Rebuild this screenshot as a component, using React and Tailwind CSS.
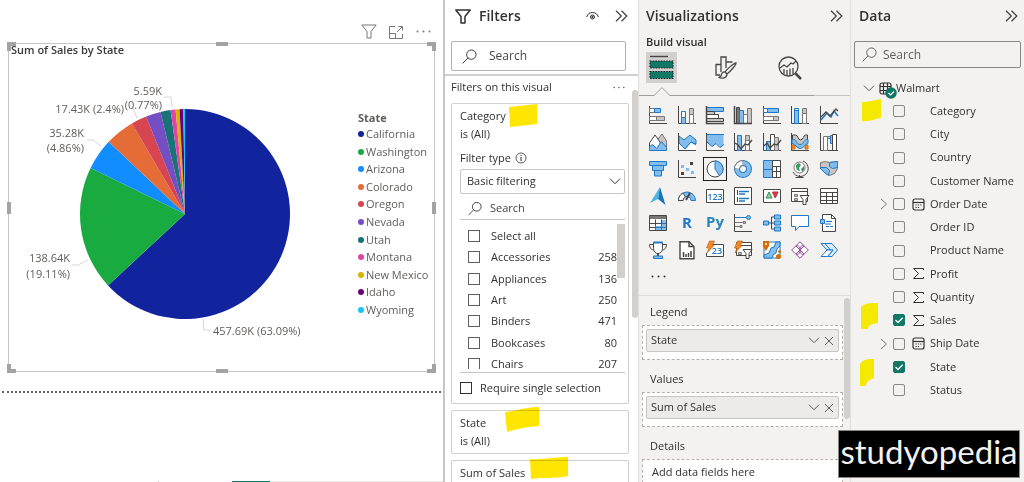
import React, { useState } from 'react';

const slices = [
  { name: 'California', share: 63.09, color: '#12239e' },
  { name: 'Washington', share: 19.11, color: '#1aab40' },
  { name: 'Arizona', share: 4.86, color: '#118dff' },
  { name: 'Colorado', share: 4.5, color: '#e66c37' },
  { name: 'Oregon', share: 2.4, color: '#d64550' },
  { name: 'Nevada', share: 2.29, color: '#744ec2' },
  { name: 'Utah', share: 1.55, color: '#197278' },
  { name: 'Montana', share: 0.77, color: '#e044a7' },
  { name: 'New Mexico', share: 0.6, color: '#d9b300' },
  { name: 'Idaho', share: 0.57, color: '#6b007b' },
  { name: 'Wyoming', share: 0.26, color: '#15c6f4' },
];

const categories = [
  { name: 'Select all', count: '' },
  { name: 'Accessories', count: 258 },
  { name: 'Appliances', count: 136 },
  { name: 'Art', count: 250 },
  { name: 'Binders', count: 471 },
  { name: 'Bookcases', count: 80 },
  { name: 'Chairs', count: 207 },
];

const fields = [
  { name: 'Category' },
  { name: 'City' },
  { name: 'Country' },
  { name: 'Customer Name' },
  { name: 'Order Date', icon: 'date' },
  { name: 'Order ID' },
  { name: 'Product Name' },
  { name: 'Profit', icon: 'sum' },
  { name: 'Quantity', icon: 'sum' },
  { name: 'Sales', icon: 'sum' },
  { name: 'Ship Date', icon: 'date' },
  { name: 'State' },
  { name: 'Status' },
];

// Palette of the visual icons
const K = '#484644';
const B = '#1f78c8';
const L = '#83bdeb';
const G = '#c8c6c4';
const M = '#797775';
const axis = <path d="M.5 0v17.5H18" stroke={K} />;

const visuals = [
  { name: 'Stacked bar chart', art: <>{axis}<path d="M.5 2.5h5v4h-5z" fill="#fff" stroke={M} /><path d="M5.5 2.5h6v4h-6z" fill={L} stroke={B} /><path d="M.5 10.5h7v4h-7z" fill="#fff" stroke={M} /><path d="M7.500 10.500h8v4h-8z" fill={G} stroke={M} /></> },
  { name: 'Stacked column chart', art: <>{axis}<path d="M3.500 5.500h4v6h-4z" fill="#fff" stroke={B} /><path d="M3.500 11.500h4v6h-4z" fill={L} stroke={B} /><path d="M11.500 8.500h4v9h-4z" fill="#fff" stroke={M} /><path d="M11.500 2.500h4v6h-4z" fill={G} stroke={M} /></> },
  { name: 'Clustered bar chart', art: <><path d="M.5 1.500h17v4H.5z" fill={L} stroke={B} /><path d="M.5 5.500h8v3H.5zM.5 12.500h17v3H.5z" fill={G} stroke={K} /><path d="M.5 8.500h12v4H.5z" fill="#fff" stroke={K} /><path d="M.5 0v17.500H18" stroke={K} strokeWidth="1.500" /></> },
  { name: 'Clustered column chart', art: <><path d="M2.500 1.500h3v16h-3z" fill={M} stroke={K} /><path d="M5.500 4.500h4v13h-4z" fill={L} stroke={B} /><path d="M9.500 8.500h4v9h-4z" fill="#fff" stroke={M} /><path d="M13.500 2.500h4v15h-4z" fill={G} stroke={M} /><path d="M.5 0v17.500H18" stroke={K} strokeWidth="1.500" /></> },
  { name: '100% stacked bar chart', art: <>{axis}<path d="M.5 2.500h4v4h-4z" fill="#fff" stroke={B} /><path d="M4.500 2.500h11v4h-11z" fill={L} stroke={B} /><path d="M.5 10.500h10v4H.5z" fill="#fff" stroke={M} /><path d="M10.500 10.500h5v4h-5z" fill={G} stroke={M} /></> },
  { name: '100% stacked column chart', art: <>{axis}<path d="M3.500 2.500h4v4h-4z" fill="#fff" stroke={B} /><path d="M3.500 4.500h4v13h-4z" fill={L} stroke={B} /><path d="M11.500 7.500h4v10h-4z" fill="#fff" stroke={M} /><path d="M11.500 2.500h4v5h-4z" fill={G} stroke={M} /></> },
  { name: 'Line chart', art: <>{axis}<path d="M1 14l6-7 4 4 3-6 4 5" stroke={B} strokeWidth="1.500" /><path d="M1 11l5-5 4 4 6-7 2 2" stroke={K} strokeWidth="1.300" /></> },
  { name: 'Area chart', art: <><path d="M9 6l4-5 4.500 7v9H9z" fill={G} stroke={M} /><path d="M.5 17V10l5.500-8 5 7 1 8z" fill="#fff" stroke={K} /><path d="M.5 17.500v-4l3-2 4 4 5-7 5 6v3z" fill={L} stroke={B} /></> },
  { name: 'Stacked area chart', art: <><path d="M1 3l5 4 6-5 6 5v4l-5-2-6 7-6-6z" fill={L} stroke={B} /><path d="M1 11l6 6 6-8 5 3v5H1z" fill="#fff" /><path d="M1 10l6 6 6-7 5 3" stroke={B} />{axis}</> },
  { name: '100% stacked area chart', art: <><path d="M1 1.500h16.500v10l-3 3-4-4-4 3L1 9z" fill={L} /><path d="M1 9l5 4.500 4-3 4 4 4-3" stroke={B} /><path d="M1 1.500h17" stroke={B} />{axis}</> },
  { name: 'Line and stacked column chart', art: <>{axis}<path d="M3.500 2.500h4v15h-4z" fill={L} stroke={B} /><path d="M11.500 2.500h4v5h-4z" fill={G} stroke={M} /><path d="M11.500 7.500h4v10h-4z" fill="#fff" stroke={M} /><path d="M1 10l3 2 3 4 4-5 3 1 4-5" stroke={K} strokeWidth="1.300" /></> },
  { name: 'Line and clustered column chart', art: <>{axis}<path d="M3.500 8.500h4v9h-4z" fill={L} stroke={B} /><path d="M7.500 1.500h4v16h-4z" fill="#fff" stroke={K} /><path d="M11.500 4.500h4v13h-4z" fill={G} stroke={M} /><path d="M1 13l3-3 3 5 4-4 3 1 4-5" stroke={K} strokeWidth="1.300" /></> },
  { name: 'Ribbon chart', art: <>{axis}<path d="M1 12h3v4H1zM14 12h3v4h-3z" fill="#f2882f" stroke="#d86c00" /><path d="M1.500 2h3c3 0 2 5 5 5s3-5 5-5h2v5c-3 0-4 7-7 7s-4-7-8-7z" fill={G} stroke={K} /><path d="M1 6.500c5-1 4 5 8 5s4-6 8-5v4c-3 0-4 5-8 5s-4-5-8-5z" fill={L} stroke={B} /></> },
  { name: 'Waterfall chart', art: <>{axis}<path d="M3.500 3.500h4v14h-4z" fill="#fff" stroke={M} /><path d="M7.500 3.500h3v2h-3z" fill={G} stroke={M} /><path d="M10.500 2.500h2v8h-2z" fill={L} stroke={B} /><path d="M12.500 1.500h4v16h-4z" fill="#fff" stroke={K} /></> },
  { name: 'Funnel chart', art: <path d="M.5 1.500h17v4H.5zM3.500 5.500h11v5h-11zM5.500 10.500h7v5.500h-7z" fill={L} stroke={B} /> },
  { name: 'Scatter chart', art: <>{axis}<path d="M12 2h3v3h-3zM3 12h3v3H3z" fill={K} /><path d="M3 5h3v3H3zM8 8h3v3H8zM13 11h3v3h-3z" fill={L} /></> },
  { name: 'Pie chart', art: <><circle cx="9" cy="9" r="8" fill="#fff" stroke={K} /><path d="M9 1a8 8 0 0 1 4.500 14.600L9 9z" fill={L} stroke={B} /></> },
  { name: 'Donut chart', art: <><circle cx="9" cy="9" r="6" stroke={B} strokeWidth="6" /><circle cx="9" cy="9" r="6" stroke={L} strokeWidth="4" /><path d="M3 9a6 6 0 0 1 6-6" stroke={M} strokeWidth="6" /><path d="M3 8.500A6 6 0 0 1 8.500 3" stroke="#fff" strokeWidth="4" /></> },
  { name: 'Treemap', art: <><path d="M.5 .5h9v17h-9z" fill={L} stroke={B} /><path d="M.5 9.500h9" stroke={B} /><path d="M9.500 .5h8v17h-8zM9.500 6.500h8M9.500 11.500h8M13.500 6.500v11" fill="#fff" stroke={K} /></> },
  { name: 'Map', art: <><circle cx="8.500" cy="7.500" r="5.500" fill="#fff" stroke={M} /><path d="M5 5l3-2 2 2-2 3 1 3-3-1-1-3zM10 9l3-3v4l-2 2z" fill="#3a9a5b" /><path d="M12 1a8 8 0 1 1-10 11M8.500 15v2.500M4.500 17.500h8" stroke={K} /></> },
  { name: 'Filled map', art: <><path d="M.5 2.500l5-1 4 1 8-1v7l-3 5-5 2-5-3-4-4z" fill={G} stroke={M} /><path d="M9.500 2.500l8-1v6l-5 1-3-2zM.5 7.500h6l3 3-1 5-4-3-4-4z" fill={L} stroke={B} /></> },
  { name: 'Azure map', art: <><path d="M11 0L1 16l8-4z" fill="#4cb4e7" /><path d="M11 0l5.500 18L9 12z" fill="#1976b8" /></> },
  { name: 'Gauge', art: <><path d="M.5 13.500a8.500 8.500 0 0 1 17 0h-4.500a4 4 0 0 0-8 0z" fill={L} stroke={B} /><path d="M.5 13.500A8.500 8.500 0 0 1 5 6l2.500 4A4 4 0 0 0 5 13.500z" fill="#fff" stroke={K} /><path d="M8 13l4-7" stroke={K} strokeWidth="2" /></> },
  { name: 'Card', art: <><path d="M.5 2.500h17v13H.5z" fill="#fff" stroke={K} /><text x="9" y="12.500" textAnchor="middle" fontSize="9" fill={B} fontWeight="600">123</text></> },
  { name: 'Multi-row card', art: <><path d="M.5 .5h17v17H.5z" fill="#fff" stroke={K} /><path d="M3.500 3v5M3.500 10v5" stroke={K} /><path d="M5 4.500h10M5 7h6M5 11.500h10M5 14h6" stroke={B} strokeWidth="1.400" /></> },
  { name: 'KPI', art: <><path d="M.5 2.500h17v13H.5z" fill="#fff" stroke={K} /><path d="M3 11l3-6 3 6z" fill="#8fd0a5" stroke="#2e8b50" /><path d="M9.500 5h5.500l-2.700 6z" fill="#e23b45" stroke="#c4262e" /></> },
  { name: 'Slicer', art: <><path d="M.5 1.500h16v13H.5zM.5 4.500h16" fill="#fff" stroke={K} /><path d="M3.500 7.500h3v2h-3zM3.500 11.500h3v2h-3z" fill={G} stroke={M} /><path d="M9 8.500h9l-3 4v5h-3v-5z" fill="#fff" stroke={K} /></> },
  { name: 'Table', art: <path d="M.5 1.500h17v15H.5zM.5 5.500h17M.5 9.500h17M.5 13.500h17M6.500 5.500v11M12.500 5.500v11" fill="#fff" stroke={K} /> },
  { name: 'Matrix', art: <><path d="M.5 1.500h17v15H.5z" fill="#fff" /><path d="M12 6h5v11h-5zM6 12h6v5H6z" fill={L} /><path d="M6.500 5.500v6M12.500 5.500v6M1 9.500h11M1 13.500h5" stroke={K} /><path d="M12.500 9.500h5M6.500 13.500h11M12.500 11v6M6.500 11v6" stroke={B} /><path d="M.5 1.500h17v15H.5z" stroke={K} /><path d="M1 3.500h16" stroke={M} strokeWidth="3" /></> },
  { name: 'R script visual', art: <text x="9" y="14" textAnchor="middle" fontSize="15" fontWeight="700" fill={B}>R</text> },
  { name: 'Python visual', art: <text x="9" y="13" textAnchor="middle" fontSize="15" fontWeight="700" fill="#2a86b8">Py</text> },
  { name: 'Key influencers', art: <>{axis}<path d="M1 3.500h12M1 8.500h9M1 12.500h5" stroke={M} /><path d="M1 3.500h12" stroke={B} /><circle cx="14.500" cy="3.500" r="2" fill={L} stroke={B} /><path d="M9.500 7.500h2v2h-2zM6 11.500h2v2H6z" fill={G} stroke={M} /></> },
  { name: 'Decomposition tree', art: <><path d="M6 9h5M8.500 3v12M8.500 3H11M8.500 15H11" stroke={K} /><path d="M.5 7h5v4h-5zM11.500 1h6v4h-6zM11.500 7h6v4h-6zM11.500 13h6v4h-6z" fill={L} stroke={B} /></> },
  { name: 'Q&A', art: <path d="M.5 1.500h17v11H8l-3.500 4v-4h-4z" fill="#fff" stroke={B} /> },
  { name: 'Narrative', art: <><path d="M2.500 .5h9l4 4v13h-13z" fill="#fff" stroke={K} /><path d="M11.500 .5v4h4" stroke={K} /><path d="M.5 5.500h4v4h-4z" fill={L} stroke={B} /><path d="M6 7.500h6M6 12.500h3M10 12.500h3M5 10h6" stroke={B} /></> },
  { name: 'Goals', art: <><path d="M4.500 3.500h-4c0 4 2 5 5 6M13.500 3.500h4c0 4-2 5-5 6" stroke={K} /><path d="M4.500 1.500h9v6c0 3-2 5-4.500 5s-4.500-2-4.500-5z" fill="#fff" stroke={K} /><path d="M4.500 1.500h9" stroke={B} strokeWidth="2" /><path d="M9 12.500v3" stroke={K} strokeWidth="2" /><path d="M4.500 15h9v2.500h-9z" fill={L} stroke={B} /></> },
  { name: 'Paginated report', art: <><path d="M2 .7h9l5 5v12H2z" fill="#fff" stroke={K} strokeWidth="1.400" /><path d="M11 .5v5h5" stroke={K} strokeWidth="1.400" /><path d="M5.500 16v-5M8 16v-3M10.500 16v-4M13 16v-6" stroke={K} strokeWidth="1.500" /></> },
  { name: 'Card (new)', art: <><path d="M2 3.500h15.500v12H.5V12" fill="#fff" stroke={K} /><text x="11" y="13" textAnchor="middle" fontSize="9" fill={B} fontWeight="600">23</text><path d="M3.500 0h5L6.500 4.500H8L1 12l2-5H.5z" fill="#f2882f" stroke="#b85a00" strokeWidth=".6" /></> },
  { name: 'Slicer (new)', art: <><path d="M2.500 1.500h15v13h-15zM6 4.500h11.500" fill="#fff" stroke={K} /><path d="M4.500 11.500h3v2h-3z" fill={G} stroke={M} /><path d="M9 8.500h9l-3 4v5h-3v-5z" fill="#fff" stroke={K} /><path d="M3.500 0h5L6.500 4.500H8L1 12l2-5H.5z" fill="#f2882f" stroke="#b85a00" strokeWidth=".6" /></> },
  { name: 'ArcGIS Maps', art: <><path d="M1 1h16v16H1z" fill="#fff" stroke={B} /><path d="M1 17v-3l5-2 2-5 3-1 2-5h4v4l-3 3-1 4-3 2-1 3z" fill={L} stroke={B} /><path d="M0 0h6v5l-3 5-3-5z" fill="#d86c00" /><circle cx="3" cy="3" r="1" fill="#fff" /><circle cx="15.500" cy="15.500" r="2.500" fill="#d86c00" /><circle cx="16.500" cy="10.500" r="1.500" fill="#d86c00" /></> },
  { name: 'Power Apps', art: <path d="M9 .7L17.300 9 9 17.300.7 9zM5 5l8 8M13 5l-8 8M5 5c3-1 4 1 4 4M13 5c-3-1-4 1-4 4M5 13c3 1 4-1 4-4M13 13c-3 1-4-1-4-4" fill="#fff" stroke="#9b4aa3" strokeLinejoin="round" /> },
  { name: 'Power Automate', art: <><path d="M1 2.500h11l5.500 6.500-5.500 6.500H8L13 9H7z" fill="#dcecf9" stroke={B} /><path d="M7 9h6l-5.500 6.500H1z" fill="#fff" stroke={B} /><path d="M5 2.500l5.500 6.500" stroke={B} /></> },
];

const labelClass = 'fill-[#605e5c] text-[11px]';

const Chart = () => {
  const cx = 176;
  const cy = 158;
  const r = 105;
  let total = 0;
  const point = (share) => {
    const a = (share / 100) * Math.PI * 2;
    return `${cx + r * Math.sin(a)} ${cy - r * Math.cos(a)}`;
  };

  return (
    <svg width="345" height="300" viewBox="0 0 345 300" role="img" aria-label="Sum of Sales by State" className="shrink-0">
      {slices.map(s => {
        const from = total;
        total += s.share;
        return (
          <path
            key={s.name}
            d={`M${cx} ${cy}L${point(from)}A${r} ${r} 0 ${s.share > 50 ? 1 : 0} 1 ${point(total)}Z`}
            fill={s.color}
          />
        );
      })}
      <g fill="none" stroke="#d8d6d4">
        <path d="M155 41h7l1 10M123 50l5 12M78 84h6l8 6M63 209h6l10-5M194 263l1 11h7" />
      </g>
      <g className={labelClass}>
        <text x="153" y="39" textAnchor="end">5.59K</text>
        <text x="153" y="53" textAnchor="end">(0.77%)</text>
        <text x="115" y="57" textAnchor="end">17.43K (2.4%)</text>
        <text x="75" y="81" textAnchor="end">35.28K</text>
        <text x="75" y="96" textAnchor="end">(4.86%)</text>
        <text x="61" y="206" textAnchor="end">138.64K</text>
        <text x="61" y="222" textAnchor="end">(19.11%)</text>
        <text x="204" y="279">457.69K (63.09%)</text>
      </g>
    </svg>
  );
};

const Funnel = ({ className }) => (
  <svg viewBox="0 0 16 15" fill="none" stroke="currentColor" strokeLinejoin="round" className={className}>
    <path d="M.8 1h14.400L10 7.500v6.500H6V7.500z" />
  </svg>
);

const Magnifier = ({ className }) => (
  <svg viewBox="0 0 16 16" width="15" height="15" fill="none" stroke="currentColor" className={className}>
    <circle cx="10" cy="6" r="5" />
    <path d="M6.500 9.500L.7 15.300" />
  </svg>
);

const Chevrons = () => (
  <button type="button" aria-label="Collapse pane" className="text-[#484644]">
    <svg viewBox="0 0 13 12" width="13" height="12" fill="none" stroke="currentColor" strokeWidth="1.300">
      <path d="M1 .7L6.300 6 1 11.300M6.500 .7L11.800 6l-5.300 5.300" />
    </svg>
  </button>
);

const ChevronDown = () => (
  <svg viewBox="0 0 12 7" width="12" height="7" fill="none" stroke="currentColor">
    <path d="M1 .7l5 5 5-5" />
  </svg>
);

const Dots = ({ className }) => (
  <svg viewBox="0 0 15 3" width="15" height="3" fill="currentColor" className={className}>
    <circle cx="1.500" cy="1.500" r="1" />
    <circle cx="7.500" cy="1.500" r="1" />
    <circle cx="13.500" cy="1.500" r="1" />
  </svg>
);

const ReportCanvas = () => (
  <main className="flex min-w-0 flex-1 flex-col bg-white">
    <div className="flex h-[43px] items-end justify-end gap-3 pr-3 pb-1 text-[#797775]">
      <button type="button" aria-label="Filters on visual"><Funnel className="h-[15px] w-4" /></button>
      <button type="button" aria-label="Focus mode">
        <svg viewBox="0 0 15 14" width="15" height="14" fill="none" stroke="currentColor">
          <path d="M6 1.500H.5v12h13V9M.5 8.500h6v5M8 7l5.500-5.500M9.500 1.500h4v4" />
        </svg>
      </button>
      <button type="button" aria-label="More options" className="flex h-[15px] items-center"><Dots /></button>
    </div>

    <section className="relative mx-2 h-[329px] border border-[#c8c6c4]">
      <span className="absolute -top-0.5 -left-0.5 size-[9px] border-t-4 border-l-4 border-[#a3a3a3]" />
      <span className="absolute -top-0.5 -right-0.5 size-[9px] border-t-4 border-r-4 border-[#a3a3a3]" />
      <span className="absolute -bottom-0.5 -left-0.5 size-[9px] border-b-4 border-l-4 border-[#a3a3a3]" />
      <span className="absolute -right-0.5 -bottom-0.5 size-[9px] border-r-4 border-b-4 border-[#a3a3a3]" />
      <span className="absolute -top-0.5 left-1/2 h-1 w-3 -translate-x-1/2 bg-[#a3a3a3]" />
      <span className="absolute -bottom-0.5 left-1/2 h-1 w-3 -translate-x-1/2 bg-[#a3a3a3]" />
      <span className="absolute top-1/2 -left-0.5 h-3 w-1 -translate-y-1/2 bg-[#a3a3a3]" />
      <span className="absolute top-1/2 -right-0.5 h-3 w-1 -translate-y-1/2 bg-[#a3a3a3]" />

      <h2 className="relative pl-0.5 text-[11px] leading-3 font-semibold text-[#3b3a39]">Sum of Sales by State</h2>
      <div className="flex justify-between">
        <Chart />
        <div className="w-[76px] pt-[54px] text-[11px] leading-4 text-[#605e5c]">
          <h3 className="font-bold">State</h3>
          <ul className="flex h-48 flex-col justify-between">
            {slices.map(s => (
              <li key={s.name} className="flex items-center gap-0.5 whitespace-nowrap">
                <span className="size-1.5 shrink-0 rounded-full" style={{ background: s.color }} />
                {s.name}
              </li>
            ))}
          </ul>
        </div>
      </div>
    </section>

    <div className="mx-0.5 mt-[19px] border-t-2 border-dotted border-[#605e5c]" />
    <div className="mt-auto flex h-px">
      <span className="ml-[158px] w-px bg-[#c8c6c4]" />
      <span className="ml-[73px] w-[38px] bg-[#117865]" />
      <span className="flex-1 bg-[#edebe9]" />
    </div>
  </main>
);

const FilterCard = ({ title, mark, children }) => (
  <section className="relative min-h-[43px] rounded-xs border border-[#d2d0ce] px-2 py-[3px]">
    <h4 className="leading-[18px]">{title}</h4>
    {mark}
    {children}
  </section>
);

const Filters = () => {
  const [picked, setPicked] = useState({});

  return (
    <aside className="flex w-[195px] shrink-0 flex-col border-l-2 border-[#c8c6c4] bg-white text-[#323130]">
      <header className="flex h-8 items-center pr-2.5 pl-2.5">
        <Funnel className="h-[15px] w-4 stroke-[1.5]" />
        <h2 className="ml-2 text-sm font-semibold">Filters</h2>
        <button type="button" aria-label="Hide filter pane" className="mr-4 ml-auto">
          <svg viewBox="0 0 13 10" width="13" height="10" fill="none" stroke="currentColor">
            <path d="M.7 6a6 6 0 0 1 11.600 0" />
            <circle cx="6.500" cy="6" r="2" />
            <circle cx="6.500" cy="6" r=".7" fill="currentColor" />
          </svg>
        </button>
        <Chevrons />
      </header>
      <div className="border-b-2 border-[#d2d0ce] pt-[9px] pr-3 pb-[3px] pl-1.5">
        <label className="flex h-[30px] items-center gap-3 rounded-xs border border-[#b3b0ad] pl-2.5">
          <Magnifier className="shrink-0" />
          <input aria-label="Search filters" placeholder="Search" className="w-full min-w-0 text-xs outline-none placeholder:text-[#484644]" />
        </label>
      </div>

      <div className="flex min-h-0 flex-1 overflow-hidden text-[11px]">
        <div className="min-w-0 flex-1 pr-[3px] pl-1.5">
          <div className="flex h-[22px] items-center justify-between pr-1">
            <h3>Filters on this visual</h3>
            <button type="button" aria-label="More options" className="text-[#605e5c]"><Dots className="w-3" /></button>
          </div>
          <div className="mt-[5px] flex flex-col gap-1.5">
            <FilterCard
              title="Category"
              mark={<svg viewBox="0 0 28 23" className="absolute top-0 left-[57px] w-7 fill-[#ffe600] mix-blend-multiply"><path d="M0 3L28 0v20L1 23z" /></svg>}
            >
              <p className="leading-[18px]">is (All)</p>
              <div className="mt-1.5 flex items-center gap-1 leading-[18px]">
                <label htmlFor="filter-type">Filter type</label>
                <svg viewBox="0 0 12 12" width="12" height="12" fill="none" stroke="currentColor" strokeWidth=".8">
                  <circle cx="6" cy="6" r="5" />
                  <path d="M6 5v4M6 3v1" strokeWidth="1" />
                </svg>
              </div>
              <div className="relative mt-0.5 mr-[-5px]">
                <select id="filter-type" className="h-[25px] w-full appearance-none rounded-xs border border-[#c8c6c4] bg-white pl-1.5">
                  <option>Basic filtering</option>
                  <option>Advanced filtering</option>
                  <option>Top N</option>
                </select>
                <span className="pointer-events-none absolute top-[9px] right-1"><ChevronDown /></span>
              </div>
              <label className="mr-[-5px] flex h-[26px] items-center gap-2 border-b border-[#c8c6c4] pt-[3px] pl-2">
                <Magnifier className="w-[14px] shrink-0" />
                <input aria-label="Search categories" placeholder="Search" className="w-full min-w-0 outline-none placeholder:text-[#484644]" />
              </label>
              <div className="mr-[-5px] flex h-[149px] overflow-hidden">
                <ul className="mt-1.5 flex h-[148px] flex-1 flex-col justify-between leading-3">
                  {categories.map(c => (
                    <li key={c.name} className="flex h-5 items-center pl-2">
                      <input
                        type="checkbox"
                        id={`cat-${c.name}`}
                        checked={!!picked[c.name]}
                        onChange={e => setPicked({ ...picked, [c.name]: e.target.checked })}
                        className="size-3 appearance-none border border-[#605e5c] checked:bg-[#117865]"
                      />
                      <label htmlFor={`cat-${c.name}`} className="ml-[11px] flex-1">{c.name}</label>
                      <span>{c.count}</span>
                    </li>
                  ))}
                </ul>
                <span className="mt-1 h-[54px] w-2 bg-[#d2d0ce]" />
              </div>
              <label className="mt-[3px] mr-[-5px] flex h-7 items-center gap-2 border-t border-[#c8c6c4] pt-[3px] whitespace-nowrap">
                <input type="checkbox" className="size-3 shrink-0 appearance-none border border-[#323130] checked:bg-[#117865]" />
                Require single selection
              </label>
            </FilterCard>
            <FilterCard
              title="State"
              mark={<svg viewBox="0 0 34 25" className="absolute -top-1 left-[53px] w-[34px] fill-[#ffe600] mix-blend-multiply"><path d="M0 5C12 4 20 0 34 0v19C20 20 12 22 2 25z" /></svg>}
            >
              <p className="leading-[18px]">is (All)</p>
            </FilterCard>
            <FilterCard
              title="Sum of Sales"
              mark={<svg viewBox="0 0 38 22" className="absolute -top-1 left-[78px] w-[38px] fill-[#ffe600] mix-blend-multiply"><path d="M0 2c14 1 24-2 38-2v19C24 22 14 20 1 22z" /></svg>}
            />
          </div>
        </div>
        <span className="mt-3.5 h-[228px] w-1.5 rounded-full bg-[#d2d0ce]" />
      </div>
    </aside>
  );
};

const Well = ({ title, value }) => (
  <section>
    <h4 className="pl-2 leading-[18px]">{title}</h4>
    <div className="mt-1 h-[35px] border border-dashed border-[#b3b0ad] bg-white p-[3px]">
      {value ? (
        <div className="flex h-[23px] items-center gap-1 rounded-xs border border-[#c8c6c4] bg-[#edebe9] pr-1 pl-1 text-[#323130]">
          <span className="flex-1">{value}</span>
          <button type="button" aria-label={`${value} options`} className="text-[#605e5c]"><ChevronDown /></button>
          <button type="button" aria-label={`Remove ${value}`} className="text-[#605e5c]">
            <svg viewBox="0 0 10 10" width="10" height="10" fill="none" stroke="currentColor"><path d="M1 1l8 8M9 1L1 9" /></svg>
          </button>
        </div>
      ) : (
        <p className="pl-1.5 leading-[18px]">Add data fields here</p>
      )}
    </div>
  </section>
);

const Visualizations = () => (
  <aside className="flex w-[212px] shrink-0 flex-col border-l border-[#e1dfdd] text-[#323130]">
    <header className="flex h-8 items-center justify-between pr-[7px] pl-[7px]">
      <h2 className="text-sm font-semibold">Visualizations</h2>
      <Chevrons />
    </header>
    <h3 className="pl-[7px] text-[11px] leading-5 font-semibold">Build visual</h3>
    <div className="flex gap-[33px] pl-[7px]">
      <button type="button" aria-label="Build visual" className="grid size-[31px] place-items-center bg-[#d2d0ce]">
        <svg viewBox="0 0 25 25" width="25" height="25" fill="none">
          <path d="M1 1.500h18" stroke={K} strokeWidth="1.400" />
          <path d="M1 6h23v7H1zM1 16.500h23v7H1z" fill="#117865" stroke="#201f1e" strokeWidth="1.200" strokeDasharray="1.500 1.200" />
        </svg>
      </button>
      <button type="button" aria-label="Format visual" className="grid size-[31px] place-items-center">
        <svg viewBox="0 0 22 23" width="22" height="23" fill="none" stroke={K} strokeWidth="1.300">
          <path d="M5 19H1V8.500h5V16M6 8.500V1h5v11M11 6h6.500" />
          <path d="M21 7c-2 0-9 6-11 9l2 2c3-2 9-9 9-11zM10 16c-3-.5-3.500 2-4 4l-2 1.500c3 1.500 8 .5 8-3.500z" fill="#f3f2f1" />
        </svg>
      </button>
      <button type="button" aria-label="Analytics" className="grid size-[31px] place-items-center">
        <svg viewBox="0 0 24 24" width="24" height="24" fill="none" stroke={K} strokeWidth="1.300">
          <circle cx="10.500" cy="10.500" r="9.500" />
          <path d="M2 12l4-3 3 2 4-4 2 1 3-3M6 18v-5M9 19.500V14M12 19.500v-7M15 18v-6" />
          <path d="M17.500 17.500L23 23" strokeWidth="2.500" />
        </svg>
      </button>
    </div>
    <div className="mt-1 flex items-end">
      <span className="w-[15px] border-b border-[#a19f9d]" />
      <svg viewBox="0 0 16 9" width="16" height="9" fill="none" stroke="#a19f9d"><path d="M0 8.500L8 .7l8 7.800" /></svg>
      <span className="flex-1 border-b border-[#a19f9d]" />
      <span className="w-9 border-b border-[#c8c6c4]" />
    </div>

    <div className="mt-[5px] mr-[7px] ml-[5px] grid auto-rows-[27px] grid-cols-7 place-items-center">
      {visuals.map(v => (
        <button
          type="button"
          key={v.name}
          aria-label={v.name}
          className={v.name === 'Pie chart' ? 'grid size-6 place-items-center border border-[#201f1e]' : 'grid size-6 place-items-center'}
        >
          <svg viewBox="0 0 18 18" width="18" height="18" fill="none" className="overflow-visible">{v.art}</svg>
        </button>
      ))}
    </div>
    <button type="button" aria-label="Get more visuals" className="mt-3 ml-3 self-start"><Dots /></button>

    <div className="mt-[17px] flex min-h-0 flex-1 overflow-hidden border-t border-[#e1dfdd] text-[11px]">
      <div className="flex flex-1 flex-col gap-2.5 pt-[7px] pr-px pl-[3px]">
        <Well title="Legend" value="State" />
        <Well title="Values" value="Sum of Sales" />
        <Well title="Details" />
      </div>
      <span className="mt-0.5 h-[121px] w-1.5 rounded-full bg-[#d2d0ce]" />
    </div>
  </aside>
);

const FieldIcon = ({ kind }) => {
  if (kind === 'sum') {
    return (
      <svg viewBox="0 0 13 13" width="13" height="13" fill="none" stroke="currentColor">
        <path d="M11.500 3V1.500h-10l5 5-5 5h10V10" />
      </svg>
    );
  }
  if (kind === 'date') {
    return (
      <svg viewBox="0 0 13 13" width="13" height="13" fill="none" stroke="currentColor" strokeWidth="1.200">
        <rect x="1" y="1" width="11" height="11" rx="2" />
        <path d="M1 4.500h11" />
        <path d="M3.500 7h6.500M3.500 9.500h4.500" strokeDasharray="1.200 1.200" />
      </svg>
    );
  }
  return <span className="w-[13px]" />;
};

const DataPane = () => {
  const [used, setUsed] = useState(['Sales', 'State']);

  const toggle = (name) => {
    setUsed(used.includes(name) ? used.filter(n => n !== name) : [...used, name]);
  };

  return (
    <aside className="relative w-[174px] shrink-0 border-l border-[#e1dfdd] text-[#323130]">
      <header className="flex h-8 items-center justify-between pr-1.5 pl-2">
        <h2 className="text-sm font-semibold">Data</h2>
        <Chevrons />
      </header>
      <label className="mx-[3px] mt-[9px] flex h-[27px] items-center gap-1.5 rounded-xs border border-[#8a8886] pl-[7px]">
        <Magnifier className="shrink-0 text-[#605e5c]" />
        <input aria-label="Search data" placeholder="Search" className="w-full min-w-0 text-xs outline-none placeholder:text-[#605e5c]" />
      </label>

      <div className="mt-2.5 flex h-5 items-center pl-3 text-[11px]">
        <span className="text-[#605e5c]"><ChevronDown /></span>
        <span className="relative ml-1 size-[13px]">
          <svg viewBox="0 0 13 13" width="13" height="13" fill="none" stroke="currentColor" strokeWidth="1.200">
            <rect x="1" y="1" width="11" height="11" rx="2" />
            <path d="M1 4.500h11M1 8.500h11M4.500 1v11M8.500 1v11" />
          </svg>
          <svg viewBox="0 0 12 12" width="12" height="12" className="absolute top-[5px] left-1.5">
            <circle cx="6" cy="6" r="5.800" fill="#117865" />
            <path d="M3.500 6l2 2 3.500-3.500" fill="none" stroke="#fff" strokeWidth="1.200" />
          </svg>
        </span>
        <span className="ml-1">Walmart</span>
      </div>

      <ul className="mt-[3px] flex h-[299px] flex-col justify-between text-[11px]">
        {fields.map(f => (
          <li key={f.name} className="flex h-5 items-center pl-[27px]">
            <span className="w-2.5 text-[#797775]">
              {f.icon === 'date' && (
                <svg viewBox="0 0 8 12" width="8" height="12" fill="none" stroke="currentColor" className="ml-0.5"><path d="M1 1l5.500 5L1 11" /></svg>
              )}
            </span>
            <span className="relative ml-[5px] size-3">
              <input
                type="checkbox"
                id={`field-${f.name}`}
                checked={used.includes(f.name)}
                onChange={() => toggle(f.name)}
                className="block size-3 appearance-none rounded-xs border border-[#8a8886] checked:border-[#117865] checked:bg-[#117865]"
              />
              {used.includes(f.name) && (
                <svg viewBox="0 0 12 12" className="pointer-events-none absolute inset-0" fill="none" stroke="#fff" strokeWidth="1.300"><path d="M2.500 6l2.500 2.500L9.700 3.800" /></svg>
              )}
            </span>
            <label htmlFor={`field-${f.name}`} className="ml-[7px] flex items-center gap-[5px] whitespace-nowrap">
              <FieldIcon kind={f.icon} />
              {f.name}
            </label>
          </li>
        ))}
      </ul>

      <svg viewBox="0 0 19 23" className="absolute top-[99px] left-[11px] w-[19px] fill-[#f5e900]"><path d="M0 3C6 3 12 1 19 0v19C12 20 8 23 0 22z" /></svg>
      <svg viewBox="0 0 17 26" className="absolute top-[303px] left-2.5 w-[17px] fill-[#f5e900]"><path d="M0 4C4 0 9 0 17 0v20c-6 1-10 2-10 6H0z" /></svg>
      <svg viewBox="0 0 14 27" className="absolute top-[359px] left-[9px] w-3.5 fill-[#f5e900]"><path d="M0 5c4-5 8-5 14-5v19c-5 2-8 4-8 8H0z" /></svg>
    </aside>
  );
};

const App = () => {
  return (
    <div className="relative flex h-screen overflow-hidden bg-[#f3f2f1] font-['Open_Sans',sans-serif]">
      <ReportCanvas />
      <Filters />
      <Visualizations />
      <DataPane />
      <div className="absolute right-1 bottom-1 flex h-12 w-[182px] items-center justify-center border border-[#8a8886] bg-black pb-1.5 font-['Lato',sans-serif] text-[33px] leading-none text-[#f3f2f1]">
        studyopedia
      </div>
    </div>
  );
};

export default App;
